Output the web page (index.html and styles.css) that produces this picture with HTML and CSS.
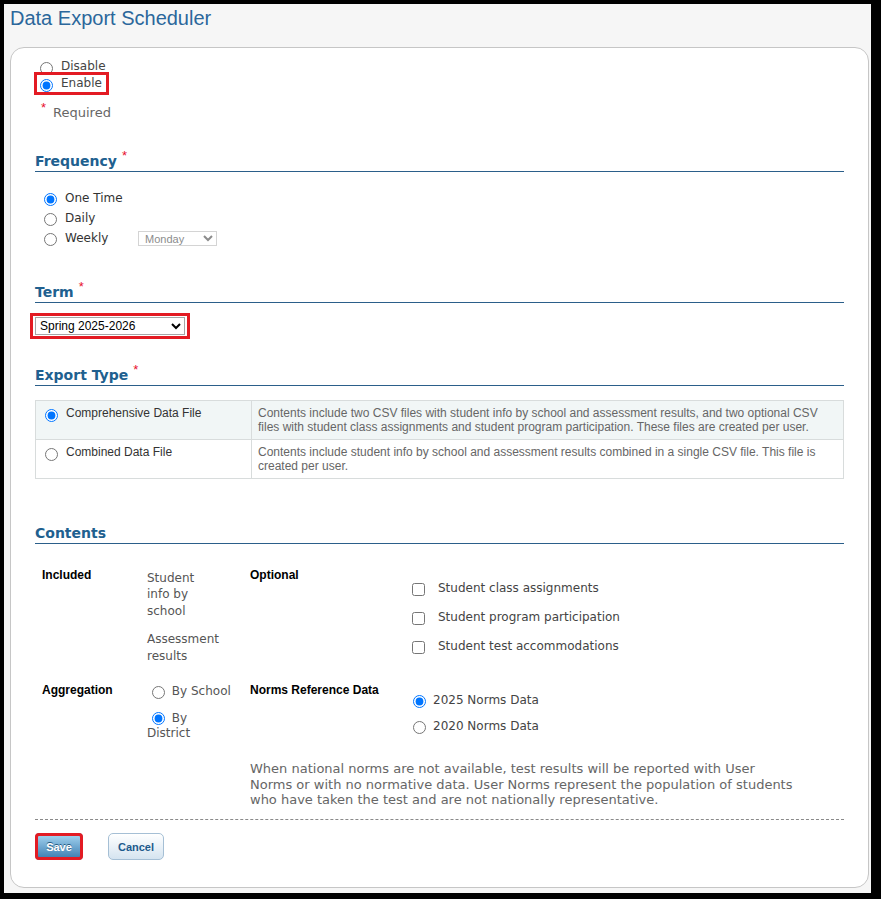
FILE: index.html
```html
<!DOCTYPE html>
<html lang="en">
<head>
  <meta charset="UTF-8">
  <title>Data Export Scheduler</title>
  <link rel="stylesheet" href="styles.css">
</head>
<body>
  <div class="frame">
    <h1 class="page-title">Data Export Scheduler</h1>

    <form class="panel">
      <!-- Стан планувальника -->
      <div class="state">
        <label class="state-row"><input type="radio" name="state" value="off"> Disable</label>
        <label class="state-row marked"><input type="radio" name="state" value="on" checked> Enable</label>
      </div>
      <p class="required-note"><span class="req">*</span>Required</p>

      <!-- Частота -->
      <h2 class="section-title first">Frequency<span class="req">*</span></h2>
      <div class="freq">
        <label class="opt"><input type="radio" name="freq" checked> One Time</label>
        <label class="opt"><input type="radio" name="freq"> Daily</label>
        <div class="opt">
          <label class="opt-label"><input type="radio" name="freq"> Weekly</label>
          <select class="day-select" disabled>
            <option>Monday</option>
            <option>Tuesday</option>
          </select>
        </div>
      </div>

      <!-- Семестр -->
      <h2 class="section-title term-title">Term<span class="req">*</span></h2>
      <div class="term-pick">
        <select class="term-select">
          <option>Spring 2025-2026</option>
          <option>Fall 2025-2026</option>
        </select>
      </div>

      <!-- Тип експорту -->
      <h2 class="section-title export-title">Export Type<span class="req">*</span></h2>
      <table class="export-table">
        <tr class="selected">
          <td class="type-cell">
            <label class="type-label"><input type="radio" name="type" checked> Comprehensive Data File</label>
          </td>
          <td>Contents include two CSV files with student info by school and assessment results, and two optional CSV files with student class assignments and student program participation. These files are created per user.</td>
        </tr>
        <tr>
          <td class="type-cell">
            <label class="type-label"><input type="radio" name="type"> Combined Data File</label>
          </td>
          <td>Contents include student info by school and assessment results combined in a single CSV file. This file is created per user.</td>
        </tr>
      </table>

      <!-- Вміст -->
      <h2 class="section-title contents-title">Contents</h2>
      <div class="contents">
        <div class="c-label">Included</div>
        <div class="included">
          <div class="inc-item">Student info by school</div>
          <div class="inc-item">Assessment results</div>
        </div>
        <div class="c-label">Optional</div>
        <div class="optional-list">
          <label class="check-row"><input type="checkbox"> Student class assignments</label>
          <label class="check-row"><input type="checkbox"> Student program participation</label>
          <label class="check-row"><input type="checkbox"> Student test accommodations</label>
        </div>

        <div class="c-label">Aggregation</div>
        <div class="agg">
          <label class="agg-opt"><input type="radio" name="agg"> By School</label>
          <label class="agg-opt"><input type="radio" name="agg" checked> By District</label>
        </div>
        <div class="c-label">Norms Reference Data</div>
        <div class="norms">
          <label class="norm-row"><input type="radio" name="norms" checked> 2025 Norms Data</label>
          <label class="norm-row"><input type="radio" name="norms"> 2020 Norms Data</label>
        </div>

        <p class="norms-note">When national norms are not available, test results will be reported with User Norms or with no normative data. User Norms represent the population of students who have taken the test and are not nationally representative.</p>
      </div>

      <div class="form-actions">
        <button type="button" class="btn-save">Save</button>
        <button type="button" class="btn-cancel">Cancel</button>
      </div>
    </form>
  </div>
</body>
</html>
```

FILE: styles.css
```css
* {
  margin: 0;
  padding: 0;
  box-sizing: border-box;
}

body {
  background: #000;
  font-family: "DejaVu Sans", Verdana, sans-serif;
  font-size: 12px;
  color: #444;
}

.frame {
  margin: 4px 10px 0 4px;
  height: 889px;
  padding: 2px 2px 0 6px;
  background: #f6f6f6;
  overflow: hidden;
}

.page-title {
  font: normal 20px/24px "Liberation Sans", Arial, sans-serif;
  color: #2b679b;
}

.panel {
  display: block;
  margin-top: 17px;
  padding: 10px 24px 27px;
  background: #fff;
  border: 1px solid #c6c6c6;
  border-radius: 14px;
}

/* annotation boxes */
.marked {
  outline: 3px solid #e31b23;
}

.state {
  padding-left: 2px;
}

.state-row {
  display: flex;
  width: max-content;
  align-items: flex-start;
  gap: 8px;
  padding-right: 4px;
  line-height: 16px;
  color: #444;
}

.state-row input {
  margin: 4px 0 0 3px;
}

.req {
  margin-left: 5px;
  font: normal 13px/0 "Liberation Sans", Arial, sans-serif;
  color: #e8112d;
  vertical-align: 6px;
}

.required-note {
  margin-top: 12.5px;
  padding-left: 6px;
  font-size: 13px;
  line-height: 16px;
  color: #666;
}

.required-note .req {
  margin: 0 7px 0 0;
  vertical-align: 5px;
}

.section-title {
  margin-top: 31px;
  font: bold 14px/19px "DejaVu Sans", Verdana, sans-serif;
  color: #20608f;
  border-bottom: 1px solid #2b5f8a;
}

.term-title {
  margin-top: 35px;
}

.export-title {
  margin-top: 30px;
}

.contents-title {
  margin-top: 45px;
}

.freq {
  margin-top: 16.5px;
  padding-left: 9px;
}

.opt {
  display: flex;
  align-items: flex-start;
  line-height: 20px;
  color: #333;
}

label.opt,
.opt-label {
  display: flex;
  align-items: flex-start;
  gap: 8px;
}

.opt input {
  margin-top: 5px;
}

.opt-label {
  width: 94px;
}

.day-select {
  width: 79px;
  height: 15px;
  margin-top: 3px;
  padding-left: 2px;
  font: 11px "Liberation Sans", Arial, sans-serif;
  color: #8c8c8c;
  opacity: 1;
  background: #fff;
  border: 1px solid #d4d4d4;
}

.term-pick {
  display: flex;
  width: max-content;
  margin: 12.5px 0 0 -2px;
  padding: 1px 2px;
  outline: 3px solid #e31b23;
}

.term-select {
  width: 150px;
  height: 18px;
  font: 12px "Liberation Sans", Arial, sans-serif;
  color: #000;
  background: #fff;
  border: 1px solid #a6a6a6;
}

.export-table {
  width: 100%;
  margin-top: 14.5px;
  border-collapse: collapse;
  font: 12px/14px "Liberation Sans", Arial, sans-serif;
  color: #666;
}

.export-table td {
  padding: 5px 6px;
  border: 1px solid #d8dcdc;
  vertical-align: top;
}

.export-table .selected {
  background: #f1f6f6;
}

.export-table .type-cell {
  width: 216px;
}

.type-label {
  display: flex;
  align-items: flex-start;
  gap: 8px;
  padding-left: 3px;
  color: #333;
}

.type-label input {
  margin-top: 3px;
}

.contents {
  display: grid;
  grid-template-columns: 105px 103px 162px 1fr;
  row-gap: 19px;
  margin-top: 23.5px;
  padding-left: 7px;
}

.c-label {
  font: bold 12px/14px "Liberation Sans", Arial, sans-serif;
  color: #000;
}

.included {
  padding-top: 2px;
  line-height: 16.8px;
  color: #555;
}

.inc-item {
  width: 72.5px;
}

.inc-item + .inc-item {
  margin-top: 11px;
}

.optional-list {
  padding-top: 12.5px;
}

.check-row {
  display: flex;
  align-items: flex-start;
  gap: 13px;
  line-height: 16px;
  color: #444;
}

.check-row + .check-row {
  margin-top: 13px;
}

.check-row input {
  margin-top: 3px;
}

.agg {
  width: 85px;
  padding-top: 1px;
}

.agg-opt {
  display: block;
  line-height: 15px;
  color: #555;
}

.agg-opt + .agg-opt {
  margin-top: 11.5px;
}

.agg-opt input {
  margin: 0 3px 0 5px;
  vertical-align: -3.5px;
}

.norms {
  padding-top: 9px;
  padding-left: 1px;
}

.norm-row {
  display: flex;
  align-items: flex-start;
  gap: 7px;
  line-height: 16px;
  color: #444;
}

.norm-row + .norm-row {
  margin-top: 10px;
}

.norm-row input {
  margin-top: 3px;
}

.norms-note {
  grid-column: 3 / -1;
  max-width: 544px;
  margin-top: 1.5px;
  font-size: 13px;
  line-height: 15.3px;
  color: #666;
}

.form-actions {
  display: flex;
  gap: 25px;
  margin-top: 12px;
  padding-top: 13px;
  border-top: 1px dashed #8a8a8a;
}

.btn-save,
.btn-cancel {
  height: 27px;
  font: bold 11px "Liberation Sans", Arial, sans-serif;
  cursor: pointer;
}

.btn-save {
  width: 48px;
  color: #fff;
  text-shadow: 0 -1px 0 #245a80;
  background: linear-gradient(#a7d6f2, #3a7cb0);
  border: 1px solid #4a85b5;
  border-radius: 4px;
  outline: 3px solid #e31b23;
  outline-offset: -3px;
}

.btn-cancel {
  width: 56px;
  color: #1d5a8c;
  background: linear-gradient(#fff, #d5e4f0);
  border: 1px solid #a5bfd5;
  border-radius: 5px;
}
```
